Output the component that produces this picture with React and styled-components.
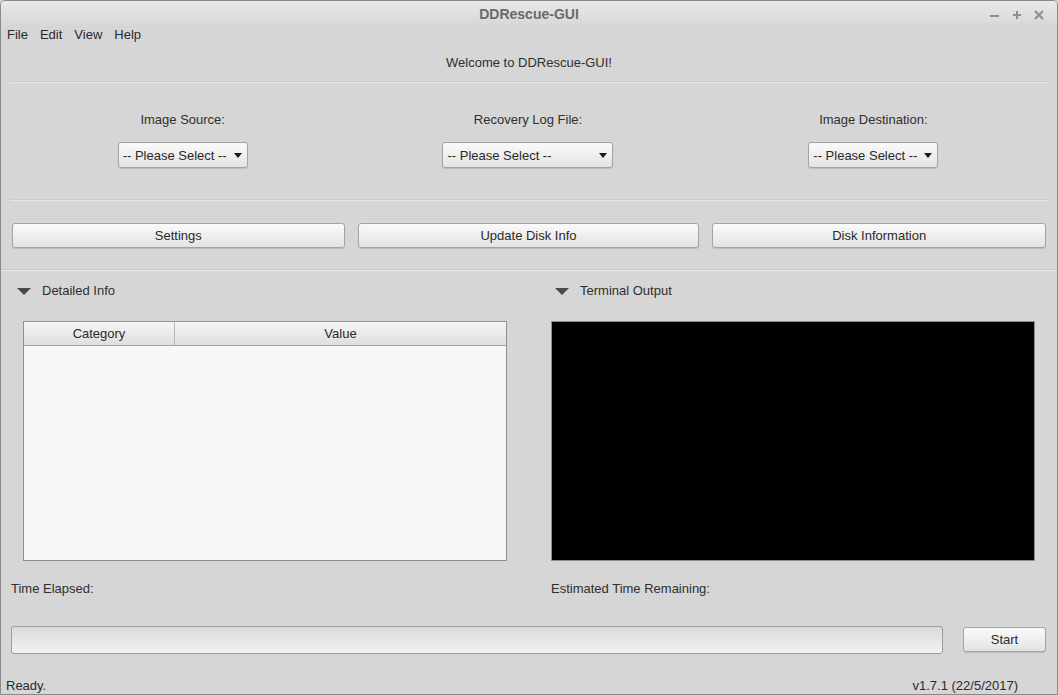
import React from "react";
import styled, { createGlobalStyle } from "styled-components";

const GlobalStyle = createGlobalStyle`
  html, body {
    margin: 0;
    padding: 0;
    background: #d6d6d6;
  }
  body {
    font-family: "Liberation Sans", Arial, sans-serif;
    font-size: 13px;
    color: #2f2f2f;
  }
`;

const App = () => {
  return (
    <>
      <GlobalStyle />
      <Window>
        <TitleBar>
          <span />
          <Title>DDRescue-GUI</Title>
          <Controls>
            <svg width="10" height="10" viewBox="0 0 10 10">
              <rect x="0" y="5" width="9" height="2" fill="#8e8e8e" />
            </svg>
            <svg width="10" height="10" viewBox="0 0 10 10">
              <rect x="1" y="4" width="8" height="2" fill="#8e8e8e" />
              <rect x="4" y="1" width="2" height="8" fill="#8e8e8e" />
            </svg>
            <svg width="10" height="10" viewBox="0 0 10 10">
              <path d="M1 1 L9 9 M9 1 L1 9" stroke="#8e8e8e" strokeWidth="2" />
            </svg>
          </Controls>
        </TitleBar>

        <MenuBar>
          <MenuItem>File</MenuItem>
          <MenuItem>Edit</MenuItem>
          <MenuItem>View</MenuItem>
          <MenuItem>Help</MenuItem>
        </MenuBar>

        <Welcome>Welcome to DDRescue-GUI!</Welcome>
        <Separator $inset $top={10} />

        <Sources>
          <SourceCol>
            <Label>Image Source:</Label>
            <Select $width={130}>
              <span>-- Please Select --</span>
              <Arrow />
            </Select>
          </SourceCol>
          <SourceCol>
            <Label>Recovery Log File:</Label>
            <Select $width={171}>
              <span>-- Please Select --</span>
              <Arrow />
            </Select>
          </SourceCol>
          <SourceCol>
            <Label>Image Destination:</Label>
            <Select $width={130}>
              <span>-- Please Select --</span>
              <Arrow />
            </Select>
          </SourceCol>
        </Sources>
        <Separator $inset $top={31} />

        <ButtonRow>
          <Button $grow={333}>Settings</Button>
          <Button $grow={342}>Update Disk Info</Button>
          <Button $grow={334}>Disk Information</Button>
        </ButtonRow>
        <Separator $top={21} />

        <Panels>
          <Column>
            <Header $shift={-6}>
              <Disclosure />
              Detailed Info
            </Header>
            <Table>
              <TableHead>
                <HeadCell $width={150}>Category</HeadCell>
                <HeadCell $last>Value</HeadCell>
              </TableHead>
            </Table>
            <TimeLabel $shift={-12}>Time Elapsed:</TimeLabel>
          </Column>
          <Column>
            <Header $shift={4}>
              <Disclosure />
              Terminal Output
            </Header>
            <Terminal />
            <TimeLabel>Estimated Time Remaining:</TimeLabel>
          </Column>
        </Panels>

        <ProgressRow>
          <Progress />
          <StartButton $width={83}>Start</StartButton>
        </ProgressRow>

        <StatusBar>
          <span>Ready.</span>
          <span>v1.7.1 (22/5/2017)</span>
        </StatusBar>
      </Window>
    </>
  );
};

const Window = styled.div`
  width: 1058px;
  height: 695px;
  box-sizing: border-box;
  border: 1px solid #8a8a8a;
  border-radius: 5px 5px 0 0;
  background: #d6d6d6;
  display: flex;
  flex-direction: column;
  overflow: hidden;
`;

const TitleBar = styled.div`
  height: 25px;
  display: grid;
  grid-template-columns: 1fr auto 1fr;
  align-items: center;
  background: linear-gradient(#e9e9e9, #d7d7d7);
`;

const Title = styled.span`
  font-weight: bold;
  font-size: 14px;
  color: #6a6a6a;
`;

const Controls = styled.div`
  justify-self: end;
  display: flex;
  gap: 12px;
  padding-right: 13px;
  margin-top: 2px;
`;

const MenuBar = styled.div`
  height: 18px;
  line-height: 18px;
  display: flex;
  gap: 12px;
  padding-left: 6px;
`;

const MenuItem = styled.span`
  color: #2a2a2a;
`;

const Welcome = styled.div`
  margin-top: 11px;
  line-height: 16px;
  text-align: center;
`;

const Separator = styled.div`
  height: 1px;
  background: #e6e6e6;
  border-top: 1px solid #cbcbcb;
  margin: ${(p) => p.$top ?? 9}px ${(p) => (p.$inset ? "9px" : "0")} 0;
`;

const Sources = styled.div`
  display: grid;
  grid-template-columns: repeat(3, 1fr);
  padding: 0 11px 0 9px;
  margin-top: 29px;
`;

const SourceCol = styled.div`
  display: flex;
  flex-direction: column;
  align-items: center;
`;

const Label = styled.div`
  line-height: 16px;
`;

const Select = styled.div`
  margin-top: 14px;
  width: ${(p) => p.$width}px;
  height: 26px;
  box-sizing: border-box;
  border: 1px solid #a3a3a3;
  border-radius: 3px;
  background: linear-gradient(#fafafa, #e4e4e4);
  box-shadow: 0 1px 1px rgba(0, 0, 0, 0.12);
  display: flex;
  align-items: center;
  justify-content: space-between;
  padding: 0 5px 0 4px;
  color: #2a2a2a;
`;

const Arrow = styled.span`
  width: 0;
  height: 0;
  border-left: 4.5px solid transparent;
  border-right: 4.5px solid transparent;
  border-top: 5px solid #1a1a1a;
`;

const ButtonRow = styled.div`
  display: flex;
  gap: 13px;
  padding: 0 11px;
  margin-top: 22px;
`;

const Button = styled.div`
  flex: ${(p) => (p.$width ? "none" : `${p.$grow ?? 1} 1 0`)};
  width: ${(p) => (p.$width ? `${p.$width}px` : "auto")};
  height: 25px;
  box-sizing: border-box;
  border: 1px solid #a3a3a3;
  border-radius: 3px;
  background: linear-gradient(#fafafa, #e3e3e3);
  box-shadow: 0 1px 1px rgba(0, 0, 0, 0.12);
  display: flex;
  align-items: center;
  justify-content: center;
  color: #2a2a2a;
`;

const StartButton = styled(Button)`
  align-self: flex-start;
  margin-top: 1px;
`;

const Panels = styled.div`
  display: flex;
  gap: 44px;
  padding: 0 22px;
`;

const Column = styled.div`
  flex: 1;
  display: flex;
  flex-direction: column;
`;

const Header = styled.div`
  margin-top: 12px;
  margin-left: ${(p) => p.$shift ?? 0}px;
  line-height: 16px;
  display: flex;
  align-items: center;
  gap: 11px;
`;

const Disclosure = styled.span`
  width: 0;
  height: 0;
  border-left: 7px solid transparent;
  border-right: 7px solid transparent;
  border-top: 7px solid #4a4a4a;
`;

const Table = styled.div`
  margin-top: 22px;
  height: 240px;
  box-sizing: border-box;
  border: 1px solid #8f8f8f;
  background: #f7f7f7;
`;

const TableHead = styled.div`
  display: flex;
  height: 24px;
  box-sizing: border-box;
  border-bottom: 1px solid #a3a3a3;
  background: linear-gradient(#f6f6f6, #dedede);
`;

const HeadCell = styled.div`
  flex: ${(p) => (p.$last ? "1" : "none")};
  width: ${(p) => (p.$width ? `${p.$width}px` : "auto")};
  border-right: ${(p) => (p.$last ? "none" : "1px solid #b8b8b8")};
  display: flex;
  align-items: center;
  justify-content: center;
  color: #2a2a2a;
`;

const Terminal = styled.div`
  margin-top: 22px;
  height: 240px;
  box-sizing: border-box;
  border: 1px solid #8f8f8f;
  background: #000;
`;

const TimeLabel = styled.div`
  margin-top: 20px;
  margin-left: ${(p) => p.$shift ?? 0}px;
  line-height: 16px;
`;

const ProgressRow = styled.div`
  display: flex;
  align-items: center;
  gap: 20px;
  padding: 0 11px 0 10px;
  margin-top: 29px;
`;

const Progress = styled.div`
  flex: 1;
  height: 28px;
  box-sizing: border-box;
  border: 1px solid #9c9c9c;
  border-radius: 3px;
  background: linear-gradient(#dadada, #f3f3f3);
`;

const StatusBar = styled.div`
  margin-top: 24px;
  line-height: 16px;
  display: flex;
  justify-content: space-between;
  padding: 0 39px 0 5px;
  color: #2a2a2a;
`;

export default App;
